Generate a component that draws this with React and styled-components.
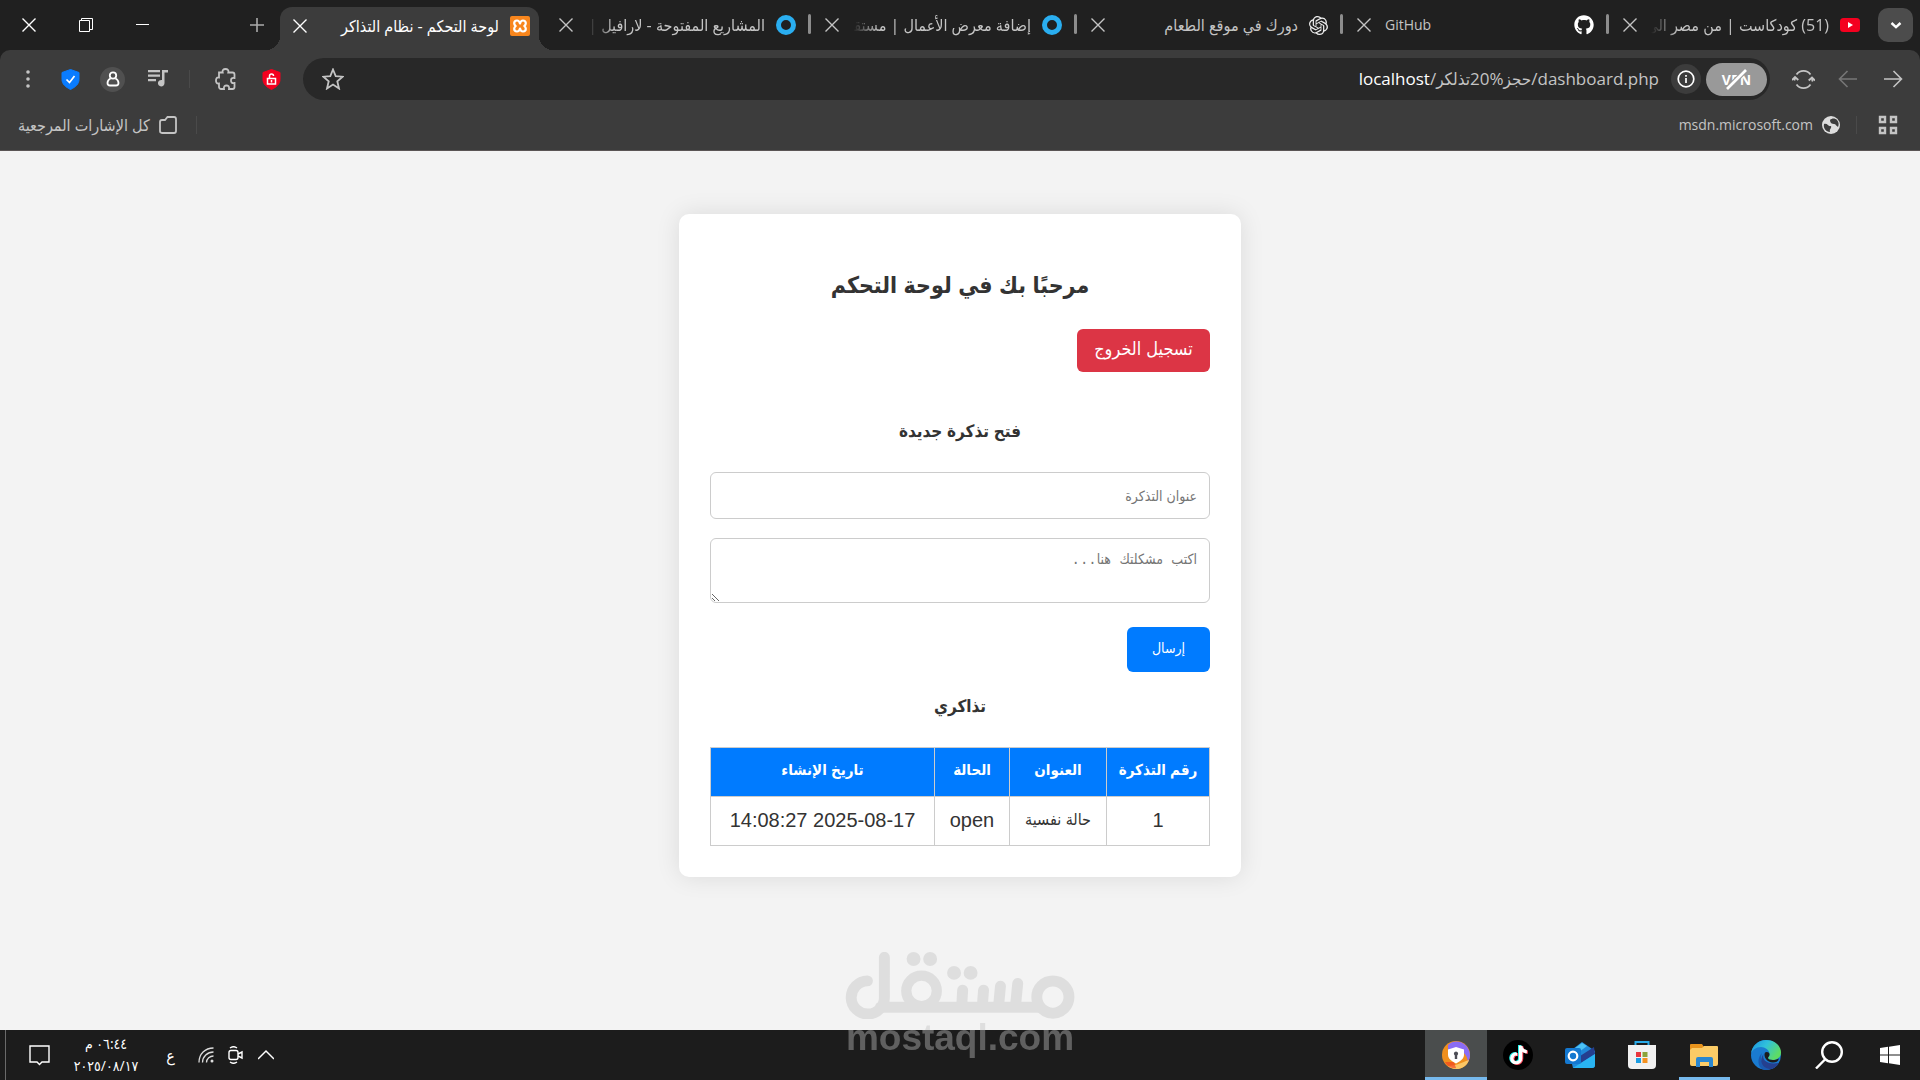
import React from "react";
import styled, { createGlobalStyle, css } from "styled-components";
import { FaGithub, FaTiktok } from "react-icons/fa";
import { SiOpenai } from "react-icons/si";

const GlobalStyle = createGlobalStyle`
  * {
    box-sizing: border-box;
  }
  body {
    margin: 0;
    background: #f3f3f3;
    color: #333;
    font-family: "Liberation Sans", "DejaVu Sans Condensed", "DejaVu Sans", sans-serif;
  }
  button,
  input,
  textarea {
    font-family: inherit;
  }
  svg {
    display: block;
    flex: none;
  }
`;

const uiFont = `"Open Sans", "Noto Sans", "DejaVu Sans Condensed", "DejaVu Sans", sans-serif`;

const Screen = styled.div`
  position: relative;
  display: flex;
  flex-direction: column;
  min-height: 100vh;
`;

/* ---------- browser ---------- */

const Browser = styled.header`
  background: #202020;
  color: #c4c4c4;
  font-family: ${uiFont};
  font-size: 14px;
`;

const IconButton = styled.button`
  display: flex;
  align-items: center;
  justify-content: center;
  flex: none;
  width: ${(props) => props.$width || 32}px;
  height: ${(props) => props.$height || 32}px;
  margin-inline-start: ${(props) => props.$start || 0}px;
  padding: 0;
  border: 0;
  border-radius: ${(props) => props.$radius || 0}px;
  background: ${(props) => props.$bg || "transparent"};
  color: ${(props) => props.$color || "#c4c4c4"};
`;

const TabStrip = styled.div`
  display: flex;
  align-items: flex-end;
  height: 50px;
  padding-inline-start: 7px;
`;

const StripCell = styled.div`
  display: flex;
  align-items: center;
  height: 50px;
  margin-inline-end: ${(props) => props.$end || 0}px;
`;

const WindowControls = styled.div`
  display: flex;
  align-items: center;
  height: 50px;
  margin-inline-start: auto;
`;

const flare = css`
  content: "";
  position: absolute;
  bottom: 0;
  width: 14px;
  height: 14px;
`;

const Tab = styled.div`
  position: relative;
  display: flex;
  align-items: center;
  flex: 0 1 266px;
  min-width: 0;
  height: 50px;
  padding: 0 13px 9px 10px;

  ${(props) =>
    props.$separator &&
    css`
      &::after {
        content: "";
        position: absolute;
        left: -1px;
        top: 14px;
        width: 3px;
        height: 20px;
        border-radius: 2px;
        background: #8c8c8c;
      }
    `}

  ${(props) =>
    props.$active &&
    css`
      height: 43px;
      flex-basis: 259px;
      margin-inline: 4px 3px;
      padding: 0 9px 16px 7px;
      border-radius: 12px 12px 0 0;
      background: #3c3c3c;
      color: #fff;
      &::before {
        ${flare}
        right: -14px;
        background: radial-gradient(circle at 100% 0, transparent 14px, #3c3c3c 14px);
      }
      &::after {
        ${flare}
        left: -14px;
        background: radial-gradient(circle at 0 0, transparent 14px, #3c3c3c 14px);
      }
    `}
`;

const TabInner = styled.div`
  display: flex;
  align-items: center;
  gap: 8px;
  width: 100%;
  padding-top: ${(props) => (props.$active ? 10 : 9)}px;
`;

const TabTitle = styled.span`
  flex: 1;
  min-width: 0;
  padding-right: 3px;
  overflow: hidden;
  font-size: ${(props) => (props.dir === "ltr" ? 14 : 16)}px;
  white-space: nowrap;
  line-height: 24px;
  text-align: ${(props) => (props.dir === "ltr" ? "left" : "right")};
  ${(props) =>
    props.$fade &&
    css`
      mask-image: linear-gradient(to left, #000 85%, transparent);
    `}
`;

const Toolbar = styled.div`
  display: flex;
  align-items: center;
  height: 58px;
  padding: 0 11px 0 16px;
  border-radius: 10px 10px 0 0;
  background: #3c3c3c;
`;

const AddressBar = styled.div`
  display: flex;
  align-items: center;
  flex: 1;
  gap: 5px;
  height: 42px;
  margin-inline: 17px 16px;
  padding: 0 3px 0 14px;
  border-radius: 21px;
  background: #282828;
`;

const VpnButton = styled.button`
  position: relative;
  width: 61px;
  height: 33px;
  padding: 0;
  border: 0;
  border-radius: 17px;
  background: #999;
  color: #fff;
  font-family: ${uiFont};
  font-size: 14px;
  font-weight: 700;
  svg {
    position: absolute;
    left: 19px;
    top: 5px;
  }
`;

const Url = styled.div`
  flex: 1;
  min-width: 0;
  padding: 0 7px;
  font-size: 17px;
  line-height: 26px;
  text-align: right;
  white-space: nowrap;
  overflow: hidden;
  outline: none;
  b {
    color: #fff;
    font-weight: 400;
  }
`;

const Divider = styled.span`
  width: 1px;
  height: 18px;
  margin: 0 ${(props) => props.$gap}px;
  background: #4a4a4a;
`;

const Bookmarks = styled.nav`
  display: flex;
  align-items: center;
  height: 43px;
  padding: 0 17px 8px 18px;
  border-bottom: 1px solid #5a5555;
  background: #3c3c3c;
`;

const BookmarkGroup = styled.div`
  display: flex;
  align-items: center;
  margin-inline-start: auto;
`;

const Bookmark = styled.a`
  display: flex;
  align-items: center;
  gap: 9px;
  color: #c4c4c4;
  font-size: ${(props) => props.$size || 14}px;
  line-height: 24px;
  text-decoration: none;
`;

/* ---------- page ---------- */

const Page = styled.main`
  flex: 1;
  padding: 63px 16px;
  background: #f3f3f3;
`;

const Card = styled.section`
  max-width: 562px;
  margin: 0 auto;
  padding: 31px;
  border-radius: 10px;
  background: #fff;
  box-shadow: 0 0 25px rgba(0, 0, 0, 0.1);
`;

const Title = styled.h2`
  margin: 23px 0 27px;
  font-size: 23px;
  line-height: 34px;
  text-align: center;
`;

const Subtitle = styled.h3`
  margin: ${(props) => props.$top}px 0 26px;
  font-size: 17px;
  line-height: 28px;
  text-align: center;
`;

const LogoutLink = styled.a`
  display: flex;
  align-items: center;
  justify-content: center;
  width: 133px;
  height: 43px;
  padding-bottom: 4px;
  border-radius: 6px;
  background: #dc3545;
  color: #fff;
  font-size: 18px;
  text-decoration: none;
`;

const TicketForm = styled.form`
  display: flex;
  flex-direction: column;
  align-items: flex-start;
`;

const field = css`
  width: 100%;
  border: 1px solid #ccc;
  border-radius: 6px;
  background: #fff;
  color: #333;
  font-size: 14px;
  &::placeholder {
    color: #757575;
  }
`;

const TitleInput = styled.input`
  ${field}
  height: 47px;
  padding: 0 12px;
`;

const ProblemInput = styled.textarea`
  ${field}
  height: 65px;
  margin: 19px 0 24px;
  padding: 12px;
  font-family: "Liberation Mono", "DejaVu Sans Condensed", monospace;
`;

const SubmitButton = styled.button`
  width: 83px;
  height: 45px;
  padding: 0 0 4px;
  border: 0;
  border-radius: 6px;
  background: #007bff;
  color: #fff;
  font-size: 14px;
`;

const TicketTable = styled.table`
  width: 100%;
  border-collapse: collapse;
  table-layout: fixed;
  text-align: center;
  th,
  td {
    height: 49px;
    padding: 0 0 4px;
    border: 1px solid #ccc;
    font-size: 16px;
  }
  th {
    background: #007bff;
    color: #fff;
    font-size: 15px;
  }
  td[dir="ltr"] {
    padding: 0 0 2px;
    font-size: 20px;
  }
`;

const Column = styled.col`
  width: ${(props) => (props.$width ? `${props.$width}px` : "auto")};
`;

/* ---------- taskbar ---------- */

const Taskbar = styled.footer`
  display: flex;
  align-items: stretch;
  height: 50px;
  background: #1c1c1c;
  color: #fff;
  font-family: ${uiFont};
`;

const TaskButton = styled.button`
  position: relative;
  display: flex;
  align-items: center;
  justify-content: center;
  width: ${(props) => props.$width || 62}px;
  padding: 0;
  border: 0;
  background: ${(props) => (props.$active ? "#4a4d4d" : "transparent")};
  color: #fff;
  ${(props) =>
    props.$line &&
    css`
      &::after {
        content: "";
        position: absolute;
        bottom: 0;
        left: calc(50% - ${props.$line / 2}px);
        width: ${props.$line}px;
        height: 3px;
        background: #76b9ed;
      }
    `}
`;

const Tray = styled.div`
  display: flex;
  align-items: center;
  margin-inline-start: auto;
`;

const Clock = styled.time`
  width: 90px;
  font-size: 14px;
  line-height: 22px;
  text-align: center;
`;

const Lang = styled.button`
  width: 39px;
  padding: 0;
  border: 0;
  background: transparent;
  color: #fff;
  font-size: 16px;
`;

const ShowDesktop = styled.button`
  width: 6px;
  height: 50px;
  margin-inline-start: 13px;
  padding: 0;
  border: 0;
  border-right: 1px solid #6a6a6a;
  background: transparent;
`;

const Watermark = styled.div`
  position: absolute;
  inset-inline: 0;
  bottom: 23px;
  display: flex;
  flex-direction: column;
  align-items: center;
  color: #c2c2c2;
  opacity: 0.41;
  pointer-events: none;
  font-size: 37px;
  font-weight: 700;
  line-height: 38px;
`;

/* ---------- icons ---------- */

const Stroke = ({ size = 20, width = 2, box = 20, children }) => (
  <svg
    width={size}
    height={size}
    viewBox={`0 0 ${box} ${box}`}
    fill="none"
    stroke="currentColor"
    strokeWidth={width}
  >
    {children}
  </svg>
);

const CloseIcon = () => (
  <Stroke size={14} box={14} width={1.4}>
    <path d="M.5.5l13 13M13.5.5l-13 13" />
  </Stroke>
);

const YoutubeIcon = () => (
  <svg width="20" height="20" viewBox="0 0 20 20">
    <rect y="3" width="20" height="14" rx="3.5" fill="#f4001f" />
    <path d="M8 7v6l5-3z" fill="#fff" />
  </svg>
);

const RingIcon = () => (
  <svg width="20" height="20" viewBox="0 0 20 20">
    <circle cx="10" cy="10" r="7.5" fill="none" stroke="#2aaef0" strokeWidth="5" />
  </svg>
);

const XamppIcon = () => (
  <svg width="20" height="20" viewBox="0 0 20 20">
    <rect width="20" height="20" rx="2" fill="#f8861d" />
    <path
      d="M10 7.500C9.500 5.500 8.500 4.500 7 4.500c-1.700 0-2.800 1.200-2.800 2.700 0 1.200.6 2 1.500 2.800-.9.800-1.500 1.600-1.500 2.800 0 1.500 1.100 2.700 2.800 2.700 1.500 0 2.500-1 3-3 .5 2 1.500 3 3 3 1.700 0 2.800-1.200 2.800-2.700 0-1.200-.6-2-1.500-2.800.9-.8 1.500-1.600 1.500-2.800 0-1.500-1.100-2.700-2.800-2.700-1.500 0-2.500 1-3 3z"
      fill="none"
      stroke="#fff"
      strokeWidth="2.200"
      strokeLinejoin="round"
    />
  </svg>
);

const ShieldIcon = ({ color, children }) => (
  <svg width="19" height="21" viewBox="0 0 19 21">
    <path
      d="M9.500.5l8.500 3v7c0 4.500-3.500 7.500-8.500 10-5-2.500-8.500-5.500-8.500-10v-7z"
      fill={color}
      stroke={color}
      strokeLinejoin="round"
    />
    <g fill="none" stroke="#fff" strokeWidth="1.700">
      {children}
    </g>
  </svg>
);

const PrivateBrowserIcon = () => (
  <svg width="28" height="30" viewBox="0 0 28 30">
    <circle cx="14" cy="15" r="14" fill="#f0901e" />
    <path d="M6 5C13-2 27 2 28 15c0 2-1 5-2 7C25 12 16 6 6 11z" fill="#8a6cf5" />
    <path d="M6 26c6 0 13-3 21-6-3 9-14 12-21 6z" fill="#fbc765" />
    <path d="M3 22h9l2 6c-4 1-9-2-11-6z" fill="#f2371f" opacity=".6" />
    <path d="M14 7l8 2.500v5c0 4-3 6.500-8 9-5-2.500-8-5-8-9v-5z" fill="#fff" />
    <path d="M14 11.500a2.200 2.200 0 011.200 4V19h-2.400v-3.500a2.200 2.200 0 011.200-4z" fill="#4d4d56" />
  </svg>
);

const TiktokIcon = () => (
  <svg width="30" height="30" viewBox="0 0 30 30">
    <circle cx="15" cy="15" r="15" fill="#000" />
    <FaTiktok x="5" y="5" size="19" color="#25f4ee" />
    <FaTiktok x="7" y="6" size="19" color="#fe4a5c" />
    <FaTiktok x="6" y="5.500" size="19" color="#fff" />
  </svg>
);

const OutlookIcon = () => (
  <svg width="30" height="28" viewBox="0 0 30 28">
    <path d="M4 11L17 1l13 9v14a3 3 0 01-3 3H8z" fill="#2088d8" />
    <path d="M6 10l11-8 5 3L10 14z" fill="#4cc2f4" />
    <path d="M12 17l17-11 1 7-14 9z" fill="#253f8f" />
    <path d="M8 27l22-14v11a3 3 0 01-3 3z" fill="#29b4f2" />
    <rect y="7" width="16" height="16" rx="2" fill="#1478d0" />
    <circle cx="8" cy="15" r="4.300" fill="none" stroke="#fff" strokeWidth="2.200" />
  </svg>
);

const StoreIcon = () => (
  <svg width="30" height="30" viewBox="0 0 30 30">
    <path d="M8.500 6V2h13v4" fill="none" stroke="#29aae8" strokeWidth="2" />
    <path d="M1 5h28v20a4 4 0 01-4 4H5a4 4 0 01-4-4z" fill="#f1f1f1" />
    <path d="M9 12h5v5H9z" fill="#e8373e" />
    <path d="M15.500 12h5v5h-5z" fill="#8ba33a" />
    <path d="M9 18h5v5H9z" fill="#1b9de2" />
    <path d="M15.500 18h5v5h-5z" fill="#f39120" />
  </svg>
);

const ExplorerIcon = () => (
  <svg width="28" height="24" viewBox="0 0 28 24">
    <path d="M0 2a1 1 0 011-1h11l2 3v5H0z" fill="#e8931c" />
    <path d="M2 5h10l2-2h13a1 1 0 011 1v17a2 2 0 01-2 2H2a2 2 0 01-2-2V7z" fill="#fbcb66" />
    <path d="M6 24v-8a2 2 0 012-2h13a2 2 0 012 2v8h-4v-5h-9v5z" fill="#2a87d0" />
  </svg>
);

const EdgeIcon = () => (
  <svg width="30" height="30" viewBox="0 0 30 30">
    <defs>
      <linearGradient id="edgeTop" x1="0" x2="1" y1="0" y2=".5">
        <stop offset="0" stopColor="#1a8fe0" />
        <stop offset=".5" stopColor="#30c1dc" />
        <stop offset="1" stopColor="#5edc63" />
      </linearGradient>
    </defs>
    <circle cx="15" cy="15" r="15" fill="#1a7bd0" />
    <path d="M0 14C1 5 8 0 15 0c9 0 15 6 15 12.500 0 5-4 7.500-8 7.500-3 0-5-1-5-2 0-.8 1.500-1.500 1.500-4C18.500 10 14 7 10 7 5 7 1 10 0 14z" fill="url(#edgeTop)" />
    <path d="M11 13c-3 6 1 14 9 14 3 0 5-1 7.500-3C24 28.500 19 30 15 30 7 30 5 19 11 13z" fill="#1a5ab0" />
    <path d="M12.500 14c-2 6 4 11 15 9-2 4-6 6-9 6-7-1-11-8-6-15z" fill="#25408f" />
    <path d="M14 12.500c2-1.500 5 0 4.500 2.500-.3 1.500-1.500 2-1.500 3 0 1 2 2 5 2 2 0 3 0 6-1.500-1 3-3 4-6 4-6 0-10-6-8-10z" fill="#1c1c1c" />
  </svg>
);

const WindowsIcon = () => (
  <svg width="20" height="20" viewBox="0 0 20 20" fill="#fff">
    <path d="M0 3l8-1.200v7.700H0zM9 1.700L20 0v9.500H9zM0 10.500h8v7.700L0 17zM9 10.500h11V20L9 18.300z" />
  </svg>
);

const Logo = () => (
  <svg
    width="230"
    height="67"
    viewBox="75 66 690 202"
    fill="none"
    stroke="currentColor"
    strokeWidth="33"
    strokeLinecap="round"
  >
    <circle cx="700" cy="202" r="48.500" />
    <circle cx="304" cy="183" r="46" strokeWidth="31" />
    <path d="M180 232.500h480M594 161l-7 71M542 169l-6 63M491 181l-4 51M428 181l-3 51M192 82v120a50 50 0 11-51-49" />
    <g fill="currentColor" stroke="none">
      <circle cx="280" cy="87" r="21" />
      <circle cx="330" cy="87" r="21" />
      <circle cx="402" cy="129" r="21" />
      <circle cx="452" cy="129" r="21" />
    </g>
  </svg>
);

/* ---------- app ---------- */

const tabs = [
  { title: "(51) كودكاست | من مصر الى", icon: <YoutubeIcon />, fade: true, separator: true },
  { title: "GitHub", dir: "ltr", icon: <FaGithub size={20} color="#fff" />, separator: true },
  { title: "دورك في موقع الطعام", icon: <SiOpenai size={19} color="#eee" />, separator: true },
  { title: "إضافة معرض الأعمال | مستق\u200d", icon: <RingIcon />, fade: true, separator: true },
  { title: "المشاريع المفتوحة - لارافيل |", icon: <RingIcon />, fade: true },
  { title: "لوحة التحكم - نظام التذاكر", icon: <XamppIcon />, active: true },
];

const tickets = [{ id: 1, title: "حالة نفسية", status: "open", created: "14:08:27 2025-08-17" }];

const BrowserChrome = () => (
  <Browser>
    <TabStrip>
      <StripCell $end={5}>
        <IconButton $width={35} $height={34} $radius={10} $bg="#4c4c4c" $color="#fff" aria-label="بحث في علامات التبويب">
          <Stroke size={12} box={12} width={2.4}>
            <path d="M1.500 4L6 8.200 10.500 4" />
          </Stroke>
        </IconButton>
      </StripCell>
      {tabs.map((tab) => (
        <Tab key={tab.title} $active={tab.active} $separator={tab.separator}>
          <TabInner $active={tab.active}>
            {tab.icon}
            <TabTitle dir={tab.dir || "rtl"} $fade={tab.fade}>
              {tab.title}
            </TabTitle>
            <IconButton $width={26} $height={26} $color={tab.active && "#fff"} aria-label="إغلاق">
              <CloseIcon />
            </IconButton>
          </TabInner>
        </Tab>
      ))}
      <StripCell>
        <IconButton $width={40} $color="#aaa" aria-label="علامة تبويب جديدة">
          <Stroke size={14} box={14} width={1.6}>
            <path d="M7 0v14M0 7h14" />
          </Stroke>
        </IconButton>
      </StripCell>
      <WindowControls>
        <IconButton $width={57} $color="#fff" aria-label="تصغير">
          <Stroke size={13} box={13} width={1}>
            <path d="M0 5.500h13" />
          </Stroke>
        </IconButton>
        <IconButton $width={57} $color="#fff" aria-label="استعادة">
          <Stroke size={14} box={14} width={1}>
            <path d="M.5 2.500h10v11H.5zM2.500 2.500v-2h11v11h-3" />
          </Stroke>
        </IconButton>
        <IconButton $width={57} $color="#fff" aria-label="إغلاق النافذة">
          <CloseIcon />
        </IconButton>
      </WindowControls>
    </TabStrip>

    <Toolbar>
      <IconButton aria-label="التالي">
        <Stroke width={1.6}>
          <path d="M1 10h17M10.500 2l8 8-8 8" />
        </Stroke>
      </IconButton>
      <IconButton $width={58} $color="#777" aria-label="السابق">
        <Stroke width={1.6}>
          <path d="M19 10H2M9.500 2l-8 8 8 8" />
        </Stroke>
      </IconButton>
      <IconButton $width={32} aria-label="إعادة التحميل">
        <Stroke size={23} box={23} width={1.8}>
          <path d="M4.500 6.500a8.700 8.700 0 0114 0M18.500 16.500a8.700 8.700 0 01-14 0M2.800 12.500a8.700 8.700 0 010-3M20.200 10.500a8.700 8.700 0 010 3M0 12l3-3 3.300 3M16.700 12.500l3.300-3 3 3" />
        </Stroke>
      </IconButton>
      <AddressBar>
        <VpnButton>
          VPN
          <Stroke size={23} box={23}>
            <path d="M2 21L21 2" stroke="#999" strokeWidth="5" />
            <path d="M2 21L21 2" strokeWidth="2.600" />
          </Stroke>
        </VpnButton>
        <IconButton $width={30} $height={30} $radius={15} $bg="#3c3c3c" $color="#fff" aria-label="معلومات الموقع">
          <Stroke size={18} box={18} width={1.7}>
            <circle cx="9" cy="9" r="7.800" />
            <path d="M9 8v5M9 5v1.700" />
          </Stroke>
        </IconButton>
        <Url role="textbox" aria-label="العنوان" dir="ltr" tabIndex={0}>
          <b>localhost</b>/حجز%20تذلكر/dashboard.php
        </Url>
        <IconButton aria-label="إضافة إشارة مرجعية">
          <Stroke size={22} box={22} width={1.8}>
            <path d="M11 1.500l2.700 6.700 7 .5-5.400 4.600 1.700 7.200-6-3.900-6 3.900 1.700-7.200L1.300 8.700l7-.5z" />
          </Stroke>
        </IconButton>
      </AddressBar>
      <IconButton aria-label="حظر الإعلانات">
        <ShieldIcon color="#f4001f">
          <path d="M5.500 9.500h8v5.500h-8zM7.500 9V7a2 2 0 014 0M9.500 11v2.500" strokeWidth="1.500" />
        </ShieldIcon>
      </IconButton>
      <IconButton $width={59} aria-label="الإضافات">
        <Stroke size={22} box={22} width={1.8}>
          <path d="M4 4.500h3.700C7 2 8.500 1 10.500 1s3.500 1 2.800 3.500H17.500a2 2 0 012 2V10c-3-.5-3.500 1-3.500 2.500s.5 3 3.500 2.500V19a2 2 0 01-2 2H14c.5-3-1-3.500-2.500-3.500S8.500 18 9 21H6a2 2 0 01-2-2v-3.500C1.500 16 1 14 1 12.500s.5-3.500 3-3z" />
        </Stroke>
      </IconButton>
      <Divider $gap={6} />
      <IconButton $width={50} aria-label="الوسائط">
        <svg width="20" height="20" viewBox="0 0 20 20" fill="#c4c4c4">
          <path d="M0 1h12v2.200H0zM0 5.500h12v2.200H0zM0 10h8v2.200H0zM14 1h6v2.400h-3.500V14a3.300 3.300 0 11-2.500-3z" />
        </svg>
      </IconButton>
      <IconButton $width={25} $height={25} $radius={13} $start={8} $bg="#505050" $color="#fff" aria-label="الملف الشخصي">
        <Stroke size={16} box={16} width={1.8}>
          <circle cx="8" cy="4.500" r="3.200" />
          <path d="M5.500 7.500C3.500 8.500 2.500 10 2.500 12c0 1.800 1 2.500 2.500 2.500h6c1.500 0 2.500-.7 2.500-2.500 0-2-1-3.500-3-4.500" />
        </Stroke>
      </IconButton>
      <IconButton $width={60} aria-label="الحماية">
        <ShieldIcon color="#0a7cff">
          <path d="M5.500 10.500L8.500 13.500 13.500 7" />
        </ShieldIcon>
      </IconButton>
      <IconButton $width={24} aria-label="القائمة">
        <svg width="4" height="18" viewBox="0 0 4 18" fill="#c4c4c4">
          <circle cx="2" cy="2" r="1.800" />
          <circle cx="2" cy="9" r="1.800" />
          <circle cx="2" cy="16" r="1.800" />
        </svg>
      </IconButton>
    </Toolbar>

    <Bookmarks>
      <IconButton $width={30} $height={24} aria-label="التطبيقات">
        <Stroke width={2.4}>
          <path d="M2 2h5v5H2zM13 2h5v5h-5zM2 13h5v5H2zM13 13h5v5h-5z" />
        </Stroke>
      </IconButton>
      <Divider $gap={16} />
      <Bookmark href="#msdn">
        <svg width="18" height="18" viewBox="0 0 18 18">
          <circle cx="9" cy="9" r="9" fill="#ddd" />
          <path d="M2 8c4-1 4 3 7 2 1 2-2 3-1 6-4 0-7-4-6-8zM8 4c2-2 5-2 7 0 2 2 2 5 1 7-2-1-2-3-4-3-2 0-4-1-4-4z" fill="#3c3c3c" />
        </svg>
        <span dir="ltr">msdn.microsoft.com</span>
      </Bookmark>
      <BookmarkGroup>
        <Divider $gap={19} />
        <Bookmark href="#all" $size={16}>
          <Stroke size={18} box={18} width={1.8}>
            <path d="M1 6c0-1.500.5-2 2-2h3l2.500-3H15c1.500 0 2 .7 2 2v12c0 1.300-.5 2-2 2H3c-1.500 0-2-.7-2-2z" />
          </Stroke>
          كل الإشارات المرجعية
        </Bookmark>
      </BookmarkGroup>
    </Bookmarks>
  </Browser>
);

const Dashboard = () => (
  <Page>
    <Card>
      <Title>مرحبًا بك في لوحة التحكم</Title>
      <LogoutLink href="#logout">تسجيل الخروج</LogoutLink>

      <Subtitle $top={46}>فتح تذكرة جديدة</Subtitle>
      <TicketForm onSubmit={(e) => e.preventDefault()}>
        <TitleInput type="text" placeholder="عنوان التذكرة" aria-label="عنوان التذكرة" />
        <ProblemInput placeholder="اكتب مشكلتك هنا..." aria-label="اكتب مشكلتك هنا" />
        <SubmitButton type="submit">إرسال</SubmitButton>
      </TicketForm>

      <Subtitle $top={21}>تذاكري</Subtitle>
      <TicketTable>
        <colgroup>
          <Column $width={103} />
          <Column $width={97} />
          <Column $width={75} />
          <Column />
        </colgroup>
        <thead>
          <tr>
            <th>رقم التذكرة</th>
            <th>العنوان</th>
            <th>الحالة</th>
            <th>تاريخ الإنشاء</th>
          </tr>
        </thead>
        <tbody>
          {tickets.map((ticket) => (
            <tr key={ticket.id}>
              <td dir="ltr">{ticket.id}</td>
              <td>{ticket.title}</td>
              <td dir="ltr">{ticket.status}</td>
              <td dir="ltr">{ticket.created}</td>
            </tr>
          ))}
        </tbody>
      </TicketTable>
    </Card>
  </Page>
);

const WindowsTaskbar = () => (
  <Taskbar>
    <TaskButton $width={60} aria-label="ابدأ">
      <WindowsIcon />
    </TaskButton>
    <TaskButton $width={63} aria-label="بحث">
      <Stroke size={28} box={28} width={2.4}>
        <circle cx="17" cy="11" r="9.800" />
        <path d="M10 18.500L1 27.500" />
      </Stroke>
    </TaskButton>
    <TaskButton aria-label="Edge">
      <EdgeIcon />
    </TaskButton>
    <TaskButton $line={51} aria-label="مستكشف الملفات">
      <ExplorerIcon />
    </TaskButton>
    <TaskButton aria-label="المتجر">
      <StoreIcon />
    </TaskButton>
    <TaskButton aria-label="Outlook">
      <OutlookIcon />
    </TaskButton>
    <TaskButton aria-label="TikTok">
      <TiktokIcon />
    </TaskButton>
    <TaskButton $active $line={62} aria-label="المتصفح">
      <PrivateBrowserIcon />
    </TaskButton>
    <Tray>
      <IconButton $color="#fff" aria-label="الرموز المخفية">
        <Stroke size={16} box={16} width={1.5}>
          <path d="M0 12l8-8 8 8" />
        </Stroke>
      </IconButton>
      <IconButton $width={28} $color="#fff" aria-label="الاجتماع">
        <Stroke size={18} box={18} width={1.4}>
          <rect x="2" y="4.500" width="9" height="9" rx="2" />
          <path d="M11 8l4-2v6l-4-2M3 2c2-1.500 5-1.500 7 0M3 16c2 1.500 5 1.500 7 0" />
        </Stroke>
      </IconButton>
      <IconButton $width={32} $color="#ddd" aria-label="الشبكة">
        <Stroke size={16} box={16} width={1.3}>
          <path d="M1 15.500C1 7 7 1 15.500 1M4.500 15.500c0-6 5-10.500 11-10.500M8.500 15.500C8.500 11.500 12 9 15.500 9" />
          <circle cx="14" cy="14" r="1.500" fill="currentColor" stroke="none" />
        </Stroke>
      </IconButton>
      <Lang>ع</Lang>
      <Clock dateTime="2025-08-17T18:44">
        ٠٦:٤٤ م
        <br />
        ٢٠٢٥/٠٨/١٧
      </Clock>
      <IconButton $width={42} $color="#fff" aria-label="الإشعارات">
        <Stroke size={22} box={22} width={1.4}>
          <path d="M1 2h19v16h-7l-2.500 2.500L8 18H1z" />
        </Stroke>
      </IconButton>
      <ShowDesktop aria-label="إظهار سطح المكتب" />
    </Tray>
  </Taskbar>
);

const App = () => {
  return (
    <Screen dir="rtl">
      <GlobalStyle />
      <BrowserChrome />
      <Dashboard />
      <WindowsTaskbar />
      <Watermark dir="ltr">
        <Logo />
        mostaql.com
      </Watermark>
    </Screen>
  );
};

export default App;
